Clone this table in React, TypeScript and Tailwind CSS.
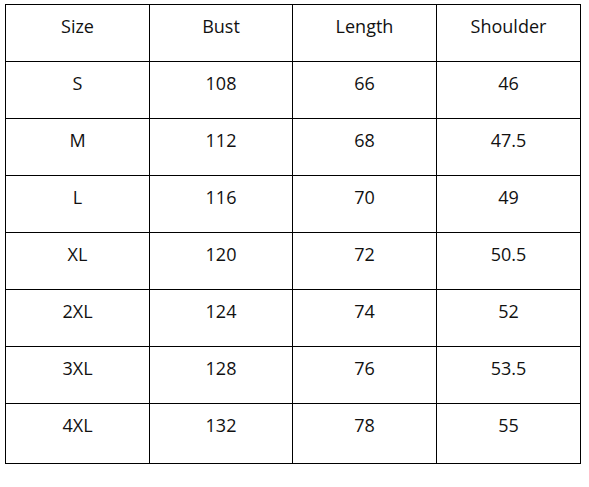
const headers = ["Size", "Bust", "Length", "Shoulder"];

const rows = [
  ["S", "108", "66", "46"],
  ["M", "112", "68", "47.5"],
  ["L", "116", "70", "49"],
  ["XL", "120", "72", "50.5"],
  ["2XL", "124", "74", "52"],
  ["3XL", "128", "76", "53.5"],
  ["4XL", "132", "78", "55"],
];

export default function App() {
  return (
    <div className="w-[589px] h-[487px] bg-white pl-[5px] pt-[4px] font-['Open_Sans',sans-serif] text-[#111]">
      <table className="border-collapse table-fixed w-[575px]">
        <colgroup>
          <col className="w-[144px]" />
          <col className="w-[143px]" />
          <col className="w-[144px]" />
          <col className="w-[144px]" />
        </colgroup>
        <tbody>
          <tr className="h-[57px]">
            {headers.map((h) => (
              <td key={h} className="border border-black text-center align-top pt-[8px] text-[18px] leading-[26px]">
                {h}
              </td>
            ))}
          </tr>
          {rows.map((r, i) => (
            <tr key={r[0]} className={i === rows.length - 1 ? "h-[60px]" : "h-[57px]"}>
              {r.map((c, j) => (
                <td key={j} className="border border-black text-center align-top pt-[8px] text-[18px] leading-[26px]">
                  {c}
                </td>
              ))}
            </tr>
          ))}
        </tbody>
      </table>
    </div>
  );
}
